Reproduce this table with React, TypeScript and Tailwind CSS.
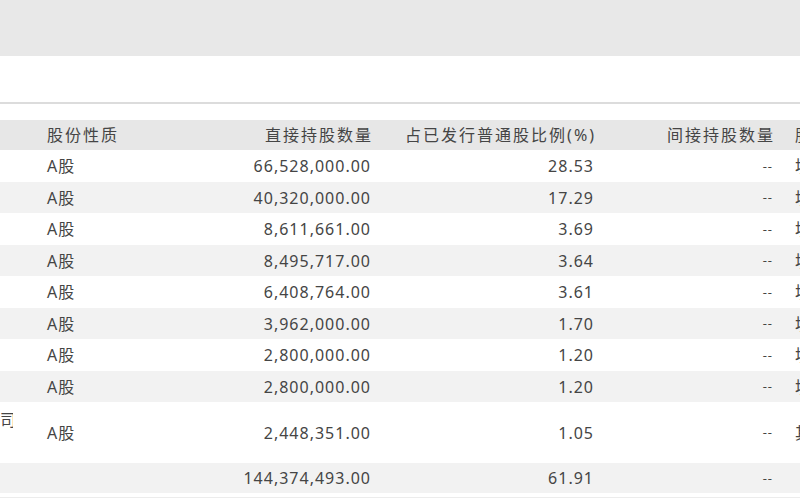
import React from "react";

type Row = {
  lead?: string;
  kind: string;
  direct: string;
  pct: string;
  indirect: string;
  tail: string;
  tall?: boolean;
};

const rows: Row[] = [
  { kind: "A股", direct: "66,528,000.00", pct: "28.53", indirect: "--", tail: "境内" },
  { kind: "A股", direct: "40,320,000.00", pct: "17.29", indirect: "--", tail: "境内" },
  { kind: "A股", direct: "8,611,661.00", pct: "3.69", indirect: "--", tail: "境内" },
  { kind: "A股", direct: "8,495,717.00", pct: "3.64", indirect: "--", tail: "境内" },
  { kind: "A股", direct: "6,408,764.00", pct: "3.61", indirect: "--", tail: "境内" },
  { kind: "A股", direct: "3,962,000.00", pct: "1.70", indirect: "--", tail: "境内" },
  { kind: "A股", direct: "2,800,000.00", pct: "1.20", indirect: "--", tail: "境内" },
  { kind: "A股", direct: "2,800,000.00", pct: "1.20", indirect: "--", tail: "境内" },
  { lead: "司", kind: "A股", direct: "2,448,351.00", pct: "1.05", indirect: "--", tail: "其他", tall: true },
];

const heights = ["h-[32px]", "h-[31px]"];

function Cells({ r }: { r: Row }) {
  return (
    <>
      <div className="w-[32px] h-full">
        {r.lead && (
          <div className="w-[13px] overflow-hidden flex justify-end pt-[10px]">
            <span className="whitespace-nowrap mr-[-3px]">{r.lead}</span>
          </div>
        )}
      </div>
      <div className="w-[180px] pl-[15px] tracking-[1px]">{r.kind}</div>
      <div className="w-[174px] pr-[15px] text-right tracking-[1px]">{r.direct}</div>
      <div className="w-[223px] pr-[15px] text-right tracking-[1px]">{r.pct}</div>
      <div className="w-[179px] pr-[15px] text-right tracking-[1px] text-[13px]">{r.indirect}</div>
      <div className="flex-1 pl-[7px] whitespace-nowrap overflow-hidden tracking-[2px]">{r.tail}</div>
    </>
  );
}

export default function App() {
  return (
    <div
      className="w-[800px] h-[500px] overflow-hidden bg-white text-[16px] text-[#454545]"
      style={{ fontFamily: '"Noto Sans", "Noto Sans CJK SC", sans-serif' }}
    >
      <div className="h-[56px] bg-[#e8e8e8]" />
      <div className="h-[46px] bg-white" />
      <div className="h-[2px] bg-[#dcdcdc]" />
      <div className="h-[16px] bg-white" />

      <div className="h-[30px] bg-[#e7e7e7] flex items-center leading-none">
        <div className="w-[32px]" />
        <div className="w-[180px] pl-[15px] tracking-[2px]">股份性质</div>
        <div className="w-[174px] pr-[13px] text-right tracking-[2px]">直接持股数量</div>
        <div className="w-[223px] pr-[13px] text-right tracking-[2px]">占已发行普通股比例(%)</div>
        <div className="w-[179px] pr-[13px] text-right tracking-[2px]">间接持股数量</div>
        <div className="flex-1 pl-[7px] whitespace-nowrap overflow-hidden tracking-[2px]">股东性质</div>
      </div>

      {rows.map((r, i) => (
        <div
          key={i}
          className={`flex items-center leading-none ${
            r.tall ? "h-[61px]" : heights[i % 2]
          } ${i % 2 === 1 ? "bg-[#f2f2f2]" : "bg-white"}`}
        >
          <Cells r={r} />
        </div>
      ))}

      <div className="h-[30px] bg-[#f2f2f2] flex items-center leading-none">
        <div className="w-[32px]" />
        <div className="w-[180px]" />
        <div className="w-[174px] pr-[15px] text-right tracking-[1px]">144,374,493.00</div>
        <div className="w-[223px] pr-[15px] text-right tracking-[1px]">61.91</div>
        <div className="w-[179px] pr-[15px] text-right tracking-[1px] text-[13px]">--</div>
        <div className="flex-1" />
      </div>
      <div className="h-[1px] bg-[#ececec] mt-[4px]" />
    </div>
  );
}
